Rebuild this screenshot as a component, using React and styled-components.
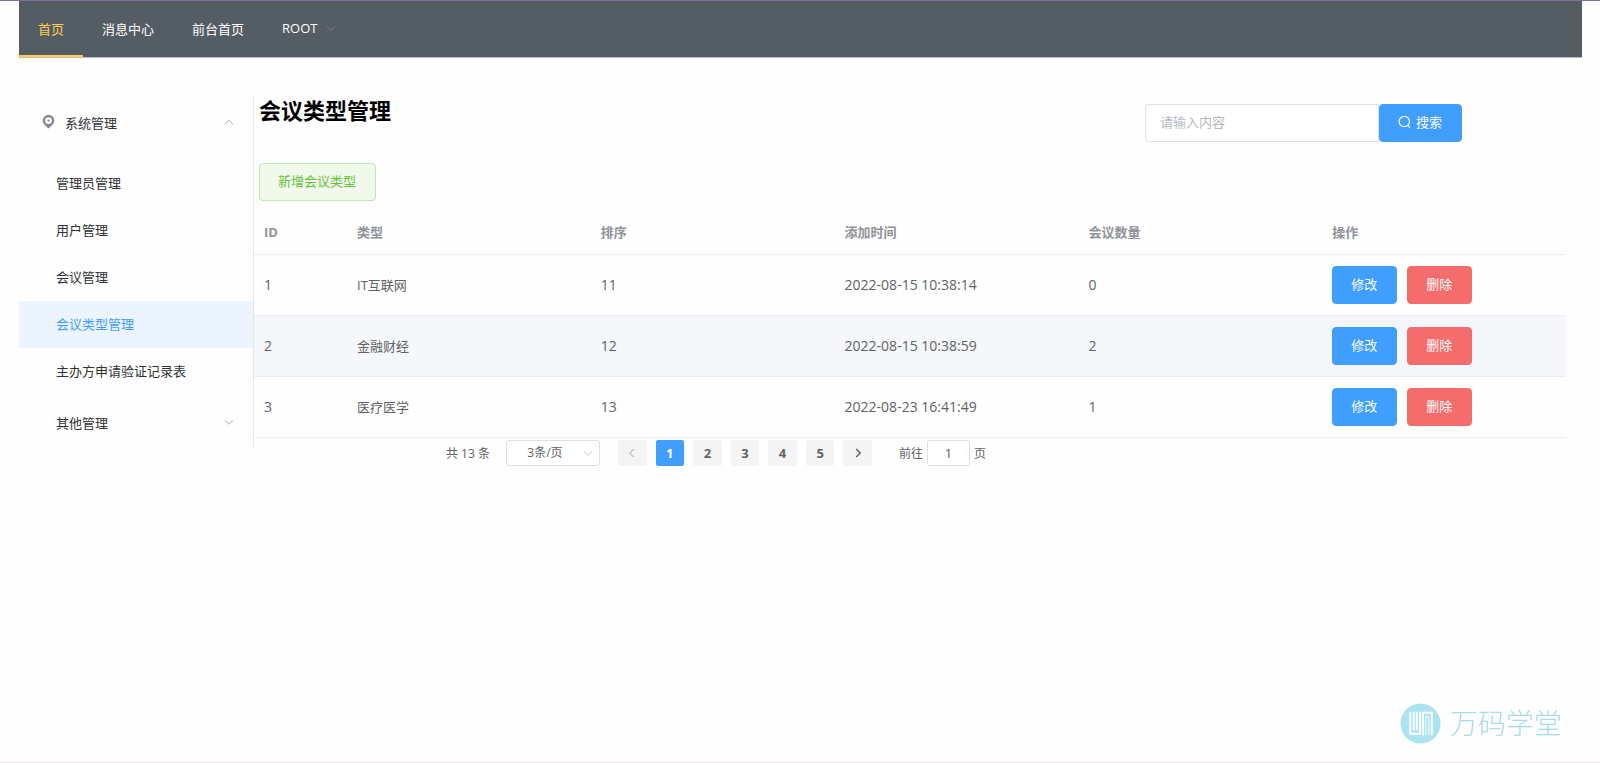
import React from "react";
import styled, { createGlobalStyle } from "styled-components";

const GlobalStyle = createGlobalStyle`
  *, *::before, *::after { box-sizing: border-box; }
  body { margin: 0; background: #fefefe; }
  body, button, input, select {
    font-family: "Open Sans", "Noto Sans CJK SC", sans-serif;
    font-size: 13px;
  }
`;

const Page = styled.div`
  display: flex;
  flex-direction: column;
  min-height: 100vh;
  color: #303133;
  border-top: 1px solid #7f7396;
  border-bottom: 1px solid #f0e8ea;
`;

const NavBar = styled.nav`
  display: flex;
  height: 57px;
  margin: 0 18px 0 19px;
  background: #545c64;
  border-bottom: 1px solid #b9bcc0;
`;

const NavItem = styled.a`
  display: flex;
  align-items: center;
  gap: 9px;
  padding: 0 19px;
  color: ${(p) => (p.$active ? "#ffd04b" : "#ffffff")};
  border-bottom: 2px solid ${(p) => (p.$active ? "#ffd04b" : "transparent")};
  text-decoration: none;
`;

const Layout = styled.div`
  display: flex;
  align-items: flex-start;
  padding: 37px 34px 0 19px;
`;

const Sidebar = styled.aside`
  flex: 0 0 235px;
  border-right: 1px solid #e6e6e6;
`;

const MenuTitle = styled.button`
  display: flex;
  align-items: center;
  width: 100%;
  height: 53px;
  padding: 0 19px 0 ${(p) => (p.$icon ? "23px" : "37px")};
  border: 0;
  background: none;
  color: #303133;
  text-align: left;
`;

const MenuLabel = styled.span`
  flex: 1;
  padding-top: 2px;
  padding-left: ${(p) => (p.$icon ? "10px" : "0")};
`;

const MenuList = styled.div`
  padding-top: 12px;
`;

const MenuItem = styled.a`
  display: flex;
  align-items: center;
  height: 47px;
  padding: 0 0 2px 37px;
  color: ${(p) => (p.$active ? "#409eff" : "#303133")};
  background: ${(p) => (p.$active ? "#ecf5ff" : "transparent")};
  text-decoration: none;
`;

const Content = styled.main`
  flex: 1;
  min-width: 0;
`;

const ContentHead = styled.header`
  display: flex;
  justify-content: space-between;
  align-items: flex-start;
  height: 68px;
  padding: 0 104px 0 5px;
`;

const Title = styled.h1`
  margin: 0;
  color: #000;
  font-size: 22px;
  line-height: 30px;
`;

const SearchForm = styled.form`
  display: flex;
  margin-top: 9px;
`;

const SearchInput = styled.input`
  width: 234px;
  height: 38px;
  padding: 0 14px 2px;
  border: 1px solid #dcdfe6;
  border-radius: 4px 0 0 4px;
  background: #fff;
  &::placeholder { color: #b4b8c0; }
`;

const tones = {
  primary: ["#409eff", "#409eff", "#ffffff"],
  danger: ["#f56c6c", "#f56c6c", "#ffffff"],
  success: ["#f0f9eb", "#c2e7b0", "#67c23a"],
};

const Button = styled.button`
  display: inline-flex;
  align-items: center;
  justify-content: center;
  gap: 5px;
  height: 38px;
  padding: 0 19px 3px 18px;
  border: 1px solid ${(p) => tones[p.$tone][1]};
  border-radius: 4px;
  background: ${(p) => tones[p.$tone][0]};
  color: ${(p) => tones[p.$tone][2]};
`;

const Toolbar = styled.div`
  display: flex;
  padding: 0 5px 9px;
`;

const Table = styled.table`
  width: 100%;
  table-layout: fixed;
  border-collapse: collapse;
  color: #606266;
`;

const HeadCell = styled.th`
  width: ${(p) => (p.$narrow ? "93px" : "auto")};
  height: 44px;
  padding: 0 10px;
  border-bottom: 1px solid #ebeef5;
  color: #909399;
  font-weight: 700;
  text-align: left;
`;

const Row = styled.tr`
  background: ${(p) => (p.$hover ? "#f5f7fa" : "transparent")};
`;

const Cell = styled.td`
  height: 61px;
  padding: 0 10px;
  border-bottom: 1px solid #ebeef5;
  font-size: ${(p) => (p.$numeric ? "14px" : "13px")};
`;

const Actions = styled.div`
  display: flex;
  gap: 10px;
`;

const Pagination = styled.div`
  display: flex;
  align-items: center;
  padding: 2px 0 0 192px;
  color: #606266;
  font-size: 12px;
`;

const SizePicker = styled.span`
  display: grid;
  align-items: center;
  width: 94px;
  margin: 0 18px 0 16px;
  & > * { grid-area: 1 / 1; }
  & > svg { justify-self: end; margin-right: 7px; pointer-events: none; }
`;

const SizeSelect = styled.select`
  appearance: none;
  width: 100%;
  height: 26px;
  padding: 0 16px 0 0;
  border: 1px solid #dcdfe6;
  border-radius: 3px;
  background: #fff;
  color: #606266;
  font-size: 12px;
  text-align: center;
  text-align-last: center;
`;

const Pager = styled.div`
  display: grid;
  grid-template-columns: repeat(7, 1fr);
  gap: 9px;
  width: 254px;
  margin-right: 27px;
`;

const PageButton = styled.button`
  display: flex;
  align-items: center;
  justify-content: center;
  height: 26px;
  padding: 0;
  border: 0;
  border-radius: 2px;
  background: ${(p) => (p.$active ? "#409eff" : "#f4f4f5")};
  color: ${(p) => (p.$active ? "#ffffff" : "#606266")};
  font-weight: 700;
  &:disabled { color: #c0c4cc; }
`;

const Jumper = styled.label`
  display: flex;
  align-items: center;
  gap: 4px;
`;

const JumpInput = styled.input`
  width: 43px;
  height: 26px;
  padding: 0;
  border: 1px solid #dcdfe6;
  border-radius: 3px;
  background: #fff;
  color: #606266;
  text-align: center;
`;

const Watermark = styled.div`
  position: fixed;
  right: 38px;
  bottom: 19px;
  display: flex;
  align-items: center;
  gap: 9px;
  color: #a9dcec;
  font-size: 28px;
  font-weight: 300;
  line-height: 42px;
  pointer-events: none;
`;

const arrowPaths = {
  down: "M1 3.5 L5.5 8 L10 3.5",
  up: "M1 8 L5.5 3.5 L10 8",
  left: "M7.5 1 L3 5.5 L7.5 10",
  right: "M3.5 1 L8 5.5 L3.5 10",
};

function Arrow({ dir, color = "#a3a6ad", weight = 1 }) {
  return (
    <svg width="10" height="10" viewBox="0 0 11 11" fill="none" stroke={color} strokeWidth={weight} aria-hidden="true">
      <path d={arrowPaths[dir]} />
    </svg>
  );
}

function PinIcon() {
  return (
    <svg width="13" height="15" viewBox="0 0 13 15" aria-hidden="true">
      <path
        fill="#858890"
        fillRule="evenodd"
        d="M6.5 .8a5.800 5.800 0 0 1 5.800 5.800c0 3.200-2.800 5-5.800 8C3.500 11.600.7 9.800.7 6.600A5.800 5.800 0 0 1 6.500.8zM6.500 3.200a3.400 3.400 0 1 0 0 6.800 3.400 3.400 0 0 0 0-6.800z"
      />
      <circle cx="6.500" cy="6.600" r="1.100" fill="#858890" />
    </svg>
  );
}

function SearchIcon() {
  return (
    <svg width="13" height="13" viewBox="0 0 13 13" fill="none" stroke="#fff" strokeWidth="1.200" aria-hidden="true">
      <circle cx="6.300" cy="6.500" r="5.200" />
      <path d="M9.600 10.300 L12 12.700" />
    </svg>
  );
}

function LogoMark() {
  return (
    <svg width="41" height="41" viewBox="0 0 42 42" fill="none" aria-hidden="true">
      <circle cx="21" cy="21" r="20.500" fill="#ace3f0" />
      <g stroke="#fff" strokeWidth="2">
        <path d="M10.500 9v22.500h10V9" />
        <path d="M14 9v19M17.200 9v19" />
        <path d="M23.500 33V10h9v23" />
        <path d="M26.500 33V13.500h3V33" strokeWidth="1" />
      </g>
    </svg>
  );
}

const columns = ["ID", "类型", "排序", "添加时间", "会议数量", "操作"];

const rows = [
  { id: 1, type: "IT互联网", order: 11, time: "2022-08-15 10:38:14", count: 0 },
  { id: 2, type: "金融财经", order: 12, time: "2022-08-15 10:38:59", count: 2, hover: true },
  { id: 3, type: "医疗医学", order: 13, time: "2022-08-23 16:41:49", count: 1 },
];

const menuItems = ["管理员管理", "用户管理", "会议管理", "会议类型管理", "主办方申请验证记录表"];

export default function App() {
  return (
    <Page>
      <GlobalStyle />
      <NavBar>
        <NavItem href="#" $active>首页</NavItem>
        <NavItem href="#">消息中心</NavItem>
        <NavItem href="#">前台首页</NavItem>
        <NavItem href="#">
          ROOT
          <Arrow dir="down" color="#80868c" />
        </NavItem>
      </NavBar>
      <Layout>
        <Sidebar>
          <MenuTitle type="button" $icon>
            <PinIcon />
            <MenuLabel $icon>系统管理</MenuLabel>
            <Arrow dir="up" />
          </MenuTitle>
          <MenuList>
            {menuItems.map((item) => (
              <MenuItem key={item} href="#" $active={item === "会议类型管理"}>{item}</MenuItem>
            ))}
          </MenuList>
          <MenuTitle type="button">
            <MenuLabel>其他管理</MenuLabel>
            <Arrow dir="down" />
          </MenuTitle>
        </Sidebar>
        <Content>
          <ContentHead>
            <Title>会议类型管理</Title>
            <SearchForm onSubmit={(e) => e.preventDefault()}>
              <SearchInput type="text" aria-label="搜索内容" placeholder="请输入内容" />
              <Button type="submit" $tone="primary">
                <SearchIcon />
                搜索
              </Button>
            </SearchForm>
          </ContentHead>
          <Toolbar>
            <Button type="button" $tone="success">新增会议类型</Button>
          </Toolbar>
          <Table>
            <thead>
              <tr>
                {columns.map((name) => (
                  <HeadCell key={name} scope="col" $narrow={name === "ID"}>{name}</HeadCell>
                ))}
              </tr>
            </thead>
            <tbody>
              {rows.map((row) => (
                <Row key={row.id} $hover={row.hover}>
                  <Cell $numeric>{row.id}</Cell>
                  <Cell>{row.type}</Cell>
                  <Cell $numeric>{row.order}</Cell>
                  <Cell $numeric>{row.time}</Cell>
                  <Cell $numeric>{row.count}</Cell>
                  <Cell>
                    <Actions>
                      <Button type="button" $tone="primary">修改</Button>
                      <Button type="button" $tone="danger">删除</Button>
                    </Actions>
                  </Cell>
                </Row>
              ))}
            </tbody>
          </Table>
          <Pagination>
            <span>共 13 条</span>
            <SizePicker>
              <SizeSelect aria-label="每页条数" defaultValue="3">
                <option value="3">3条/页</option>
              </SizeSelect>
              <Arrow dir="down" color="#c0c4cc" />
            </SizePicker>
            <Pager>
              <PageButton type="button" disabled aria-label="上一页">
                <Arrow dir="left" color="#c0c4cc" weight={1.5} />
              </PageButton>
              {[1, 2, 3, 4, 5].map((n) => (
                <PageButton key={n} type="button" $active={n === 1}>{n}</PageButton>
              ))}
              <PageButton type="button" aria-label="下一页">
                <Arrow dir="right" color="#606266" weight={1.5} />
              </PageButton>
            </Pager>
            <Jumper>
              前往
              <JumpInput type="text" defaultValue="1" />
              页
            </Jumper>
          </Pagination>
        </Content>
      </Layout>
      <Watermark>
        <LogoMark />
        <span>万码学堂</span>
      </Watermark>
    </Page>
  );
}
